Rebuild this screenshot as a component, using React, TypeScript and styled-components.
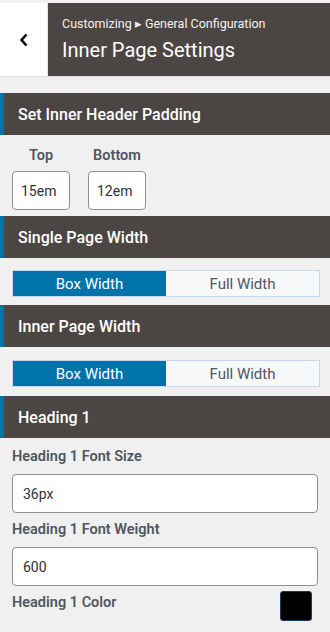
import React from "react"
import styled, { createGlobalStyle } from "styled-components"

const GlobalStyle = createGlobalStyle`
  body {
    margin: 0;
    background: #f0f0f0;
    font-family: Roboto, "Liberation Sans", Arial, sans-serif;
  }
`

const Page = styled.div`
  width: 330px;
  min-height: 632px;
  background: #f0f0f0;
  display: flex;
  flex-direction: column;
`

const TopBar = styled.div`
  display: flex;
  height: 73px;
  margin-top: 3px;
  border-bottom: 1px solid #dcdcde;
`

const BackButton = styled.button`
  width: 48px;
  border: none;
  border-right: 1px solid #e4e4e4;
  background: #fff;
  display: flex;
  align-items: center;
  justify-content: center;
  padding: 0;
  cursor: pointer;
`

const TitleBox = styled.div`
  flex: 1;
  background: #4b4644;
  color: #fff;
  padding: 13px 14px 0;
  display: flex;
  flex-direction: column;
`

const Crumb = styled.span`
  font-size: 12.5px;
  line-height: 16px;
  color: #f3f3f3;
`

const Title = styled.h1`
  margin: 5px 0 0;
  font-size: 20px;
  font-weight: 400;
  line-height: 26px;
`

const SectionHeader = styled.div<{ $mt?: number }>`
  margin-top: ${(p) => p.$mt ?? 0}px;
  height: 42px;
  background: #4b4644;
  border-left: 4px solid #0073aa;
  color: #fff;
  display: flex;
  align-items: center;
  padding-left: 14px;
  font-size: 16px;
  font-weight: 500;
`

const PaddingRow = styled.div`
  display: flex;
  gap: 18px;
  padding: 11px 12px 6px;
`

const PaddingItem = styled.div`
  display: flex;
  flex-direction: column;
  align-items: center;
  gap: 5px;
`

const SmallLabel = styled.span`
  font-size: 14.5px;
  font-weight: 600;
  line-height: 20px;
  color: #50575e;
`

const SmallInput = styled.div`
  box-sizing: border-box;
  width: 58px;
  height: 39px;
  background: #fff;
  border: 1px solid #8c8f94;
  border-radius: 4px;
  display: flex;
  align-items: center;
  padding-left: 8px;
  font-size: 14px;
  color: #2c3338;
`

const Toggle = styled.div<{ $mt: number; $mb: number }>`
  display: flex;
  margin: ${(p) => p.$mt}px 10px ${(p) => p.$mb}px 12px;
  height: 27px;
  border: 1px solid #c5d9ed;
  box-sizing: border-box;
`

const ToggleOption = styled.div<{ $active?: boolean }>`
  flex: 1;
  display: flex;
  align-items: center;
  justify-content: center;
  font-size: 15px;
  background: ${(p) => (p.$active ? "#0073aa" : "#f7f8f9")};
  color: ${(p) => (p.$active ? "#fff" : "#50575e")};
`

const Fields = styled.div`
  display: flex;
  flex-direction: column;
  padding: 9px 12px 0;
`

const FieldLabel = styled.span`
  font-size: 14.5px;
  font-weight: 600;
  line-height: 20px;
  color: #50575e;
  margin-bottom: 7px;
`

const TextInput = styled.div`
  box-sizing: border-box;
  height: 39px;
  background: #fff;
  border: 1px solid #8c8f94;
  border-radius: 4px;
  display: flex;
  align-items: center;
  padding-left: 10px;
  font-size: 14px;
  color: #2c3338;
  margin-bottom: 7px;
`

const ColorRow = styled.div`
  display: flex;
  align-items: center;
  justify-content: space-between;
  margin-top: -2px;
  padding-right: 6px;
`

const Swatch = styled.div<{ $color: string }>`
  width: 32px;
  height: 30px;
  box-sizing: border-box;
  background: ${(p) => p.$color};
  border: 1px solid #1d3b5a;
  border-radius: 3px;
`

const WidthToggle = ({ mt, mb }: { mt: number; mb: number }) => (
  <Toggle $mt={mt} $mb={mb}>
    <ToggleOption $active>Box Width</ToggleOption>
    <ToggleOption>Full Width</ToggleOption>
  </Toggle>
)

export default function App() {
  return (
    <Page>
      <GlobalStyle />
      <TopBar>
        <BackButton aria-label="Back">
          <svg width="10" height="14" viewBox="0 0 10 14">
            <path d="M7.5 1.5 L2.5 7 L7.5 12.5" fill="none" stroke="#000" strokeWidth="2.6" />
          </svg>
        </BackButton>
        <TitleBox>
          <Crumb>Customizing ▸ General Configuration</Crumb>
          <Title>Inner Page Settings</Title>
        </TitleBox>
      </TopBar>

      <SectionHeader $mt={16}>Set Inner Header Padding</SectionHeader>
      <PaddingRow>
        <PaddingItem>
          <SmallLabel>Top</SmallLabel>
          <SmallInput>15em</SmallInput>
        </PaddingItem>
        <PaddingItem>
          <SmallLabel>Bottom</SmallLabel>
          <SmallInput>12em</SmallInput>
        </PaddingItem>
      </PaddingRow>

      <SectionHeader>Single Page Width</SectionHeader>
      <WidthToggle mt={12} mb={8} />

      <SectionHeader>Inner Page Width</SectionHeader>
      <WidthToggle mt={13} mb={9} />

      <SectionHeader>Heading 1</SectionHeader>
      <Fields>
        <FieldLabel>Heading 1 Font Size</FieldLabel>
        <TextInput>36px</TextInput>
        <FieldLabel>Heading 1 Font Weight</FieldLabel>
        <TextInput>600</TextInput>
        <ColorRow>
          <FieldLabel>Heading 1 Color</FieldLabel>
          <Swatch $color="#000" />
        </ColorRow>
      </Fields>
    </Page>
  )
}
